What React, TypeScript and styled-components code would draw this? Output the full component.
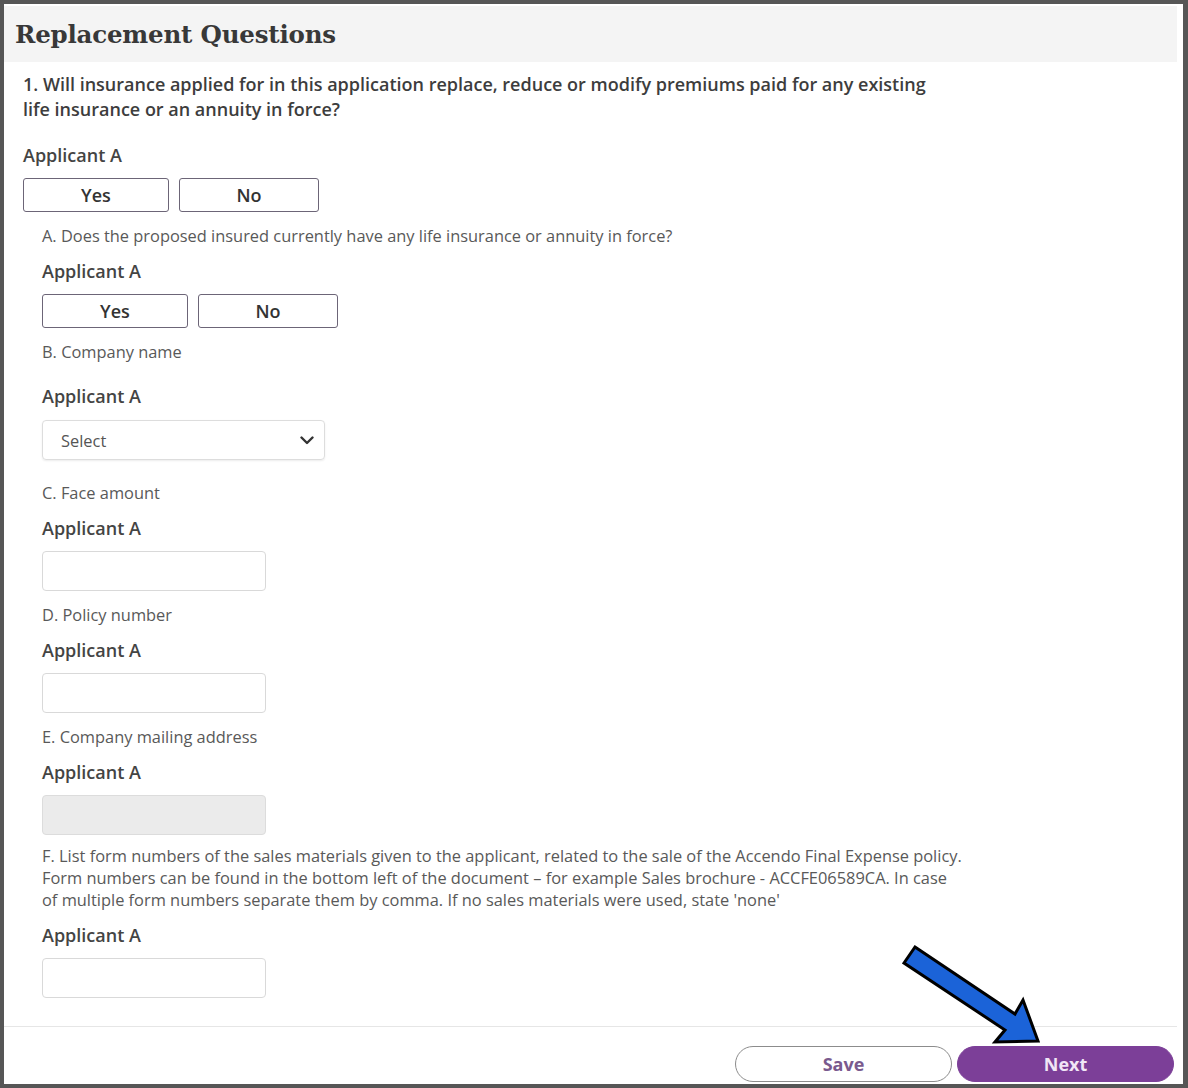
import React from 'react';
import styled, { createGlobalStyle } from 'styled-components';

type Control = 'choice' | 'select' | 'text' | 'disabled';

interface Field {
  key: string;
  label: string[];
  control: Control;
  top?: number;
  applicantTop?: number;
}

const fields: Field[] = [
  {
    key: 'A',
    label: ['A. Does the proposed insured currently have any life insurance or annuity in force?'],
    control: 'choice',
    top: 13,
  },
  { key: 'B', label: ['B. Company name'], control: 'select', applicantTop: 21 },
  { key: 'C', label: ['C. Face amount'], control: 'text', top: 22 },
  { key: 'D', label: ['D. Policy number'], control: 'text' },
  { key: 'E', label: ['E. Company mailing address'], control: 'disabled' },
  {
    key: 'F',
    label: [
      'F. List form numbers of the sales materials given to the applicant, related to the sale of the Accendo Final Expense policy.',
      'Form numbers can be found in the bottom left of the document \u2013 for example Sales brochure - ACCFE06589CA. In case',
      "of multiple form numbers separate them by comma. If no sales materials were used, state 'none'",
    ],
    control: 'text',
    top: 10,
  },
];

const ChoiceRow: React.FC = () => (
  <ButtonRow>
    <ChoiceButton $w={146}>Yes</ChoiceButton>
    <ChoiceButton $w={140}>No</ChoiceButton>
  </ButtonRow>
);

const renderControl = (control: Control) => {
  switch (control) {
    case 'choice':
      return <ChoiceRow />;
    case 'select':
      return (
        <SelectBox>
          <span>Select</span>
          <svg width="14" height="9" viewBox="0 0 14 9">
            <path d="M1.5 1.5 L7 7 L12.5 1.5" fill="none" stroke="#333" strokeWidth="2.4" strokeLinecap="round" strokeLinejoin="round" />
          </svg>
        </SelectBox>
      );
    case 'disabled':
      return <TextInput disabled />;
    default:
      return <TextInput />;
  }
};

const App: React.FC = () => (
  <>
    <GlobalStyle />
    <Frame>
      <Panel>
        <Header>
          <Title>Replacement Questions</Title>
        </Header>

        <Body>
          <Question>
            1. Will insurance applied for in this application replace, reduce or modify premiums paid for any existing
            <br />
            life insurance or an annuity in force?
          </Question>
          <ApplicantLabel $top={21}>Applicant A</ApplicantLabel>
          <ChoiceRow />

          <SubSection>
            {fields.map(field => (
              <FieldBlock key={field.key} $top={field.top ?? 13}>
                <SubLabel>
                  {field.label.map((line, i) => (
                    <React.Fragment key={i}>
                      {i > 0 && <br />}
                      {line}
                    </React.Fragment>
                  ))}
                </SubLabel>
                <ApplicantLabel $top={field.applicantTop ?? 12}>Applicant A</ApplicantLabel>
                {renderControl(field.control)}
              </FieldBlock>
            ))}
          </SubSection>
        </Body>

        <Footer>
          <SaveButton>Save</SaveButton>
          <NextButton>Next</NextButton>
        </Footer>
      </Panel>

      <Arrow viewBox="895 940 150 110" width="150" height="110">
        <polygon
          points="915,947 1015,1014 1023,1000 1038,1041 995,1042 1005,1030 904,963"
          fill="#1b63d8"
          stroke="#000"
          strokeWidth="3"
          strokeLinejoin="miter"
        />
      </Arrow>
    </Frame>
  </>
);

const GlobalStyle = createGlobalStyle`
  html, body {
    margin: 0;
    padding: 0;
    background: #565656;
  }

  body {
    font-family: 'Open Sans', 'Noto Sans', sans-serif;
    color: #333;
  }
`;

const Frame = styled.div`
  position: relative;
  width: 1188px;
  height: 1088px;
  box-sizing: border-box;
  padding: 4px 5px 4px 4px;
  background: #565656;
  overflow: hidden;
`;

const Panel = styled.div`
  display: flex;
  flex-direction: column;
  height: 100%;
  box-sizing: border-box;
  padding: 2px 6px 0 0;
  background: #fff;
  overflow: hidden;
`;

const Header = styled.div`
  display: flex;
  align-items: center;
  height: 56px;
  padding-left: 11px;
  background: #f4f4f4;
`;

const Title = styled.h1`
  margin: 0;
  font-family: 'DejaVu Serif', 'Liberation Serif', serif;
  font-weight: 700;
  font-size: 24.5px;
  color: #383838;
  letter-spacing: -0.2px;
`;

const Body = styled.div`
  padding: 10px 0 0 19px;
`;

const Question = styled.p`
  margin: 0;
  font-size: 18px;
  font-weight: 600;
  line-height: 25px;
  color: #3d3d3d;
`;

const ApplicantLabel = styled.div<{ $top: number }>`
  margin-top: ${({ $top }) => $top}px;
  font-size: 18px;
  font-weight: 600;
  line-height: 24px;
  color: #444;
`;

const ButtonRow = styled.div`
  display: flex;
  gap: 10px;
  margin-top: 11px;
`;

const ChoiceButton = styled.button<{ $w: number }>`
  width: ${({ $w }) => $w}px;
  height: 34px;
  padding: 0;
  border: 1.5px solid #6c6577;
  border-radius: 3px;
  background: #fff;
  font-family: 'Open Sans', sans-serif;
  font-weight: 600;
  font-size: 18px;
  color: #333;
`;

const SubSection = styled.div`
  padding-left: 19px;
`;

const FieldBlock = styled.div<{ $top: number }>`
  margin-top: ${({ $top }) => $top}px;
`;

const SubLabel = styled.div`
  font-size: 16.4px;
  line-height: 22px;
  color: #595959;
`;

const SelectBox = styled.div`
  display: flex;
  align-items: center;
  justify-content: space-between;
  width: 283px;
  height: 40px;
  margin-top: 12px;
  box-sizing: border-box;
  padding: 0 10px 0 18px;
  border: 1px solid #ddd;
  border-radius: 4px;
  box-shadow: 0 1px 2px rgba(0, 0, 0, 0.08);
  font-size: 16.4px;
  color: #555;
`;

const TextInput = styled.input`
  display: block;
  width: 224px;
  height: 40px;
  margin-top: 11px;
  box-sizing: border-box;
  border: 1px solid #d9d9d9;
  border-radius: 4px;
  background: #fff;

  &:disabled {
    background: #ebebeb;
    border-color: #dcdcdc;
  }
`;

const Footer = styled.div`
  display: flex;
  justify-content: flex-end;
  gap: 5px;
  margin-top: 28px;
  padding: 19px 3px 0 0;
  border-top: 1px solid #e6e6e6;
`;

const PillButton = styled.button`
  width: 217px;
  height: 36px;
  border-radius: 18px;
  font-family: 'Open Sans', sans-serif;
  font-weight: 700;
  font-size: 18px;
`;

const SaveButton = styled(PillButton)`
  border: 1px solid #8c8c8c;
  background: #fff;
  color: #7a5a8e;
`;

const NextButton = styled(PillButton)`
  border: 1px solid #7c3f98;
  background: #7c3f98;
  color: #f1e6f6;
`;

const Arrow = styled.svg`
  position: absolute;
  left: 895px;
  top: 940px;
  overflow: visible;
`;

export default App;
